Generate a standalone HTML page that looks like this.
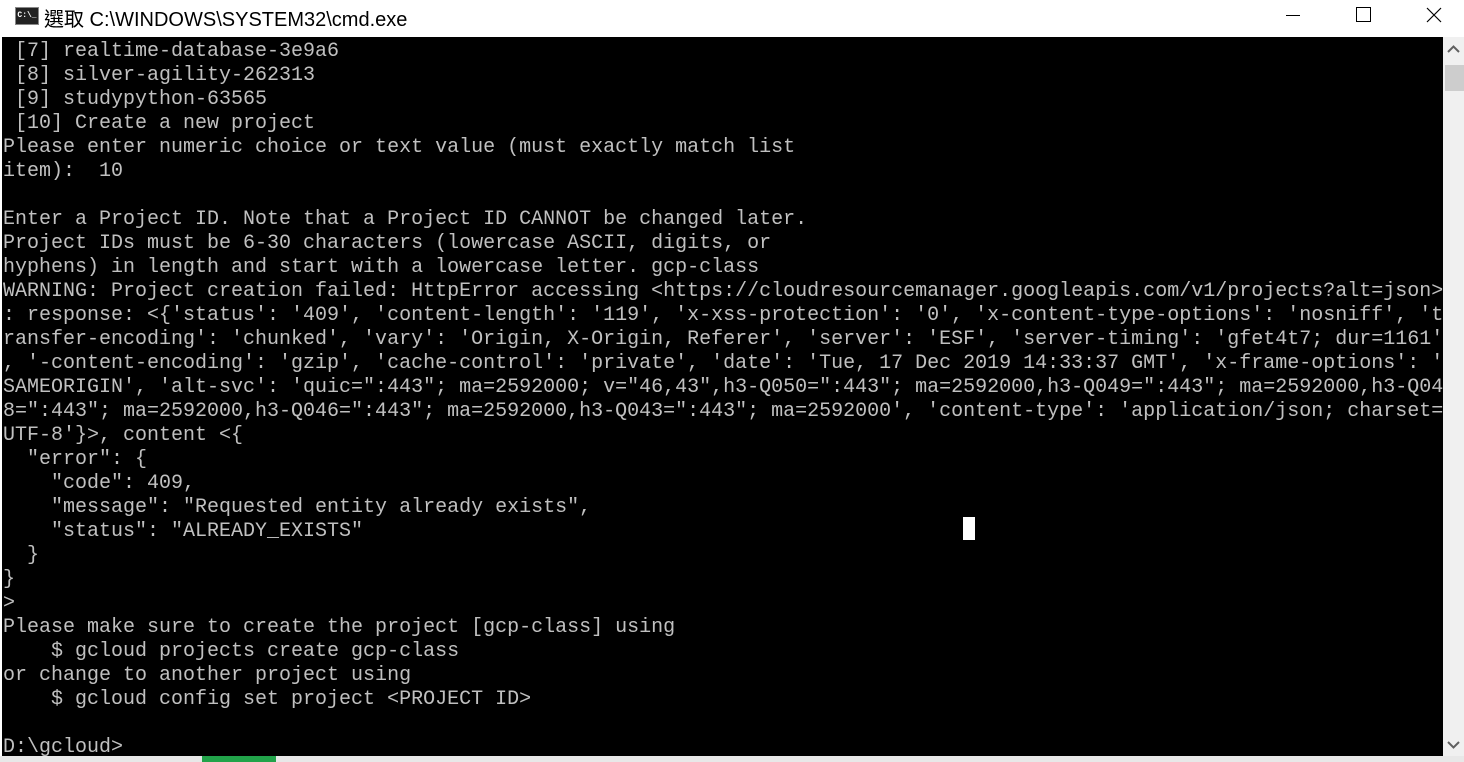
<!DOCTYPE html>
<html><head><meta charset="utf-8"><style>
body{margin:0;width:1464px;height:762px;overflow:hidden;background:#fff;position:relative;font-family:"Liberation Sans","Noto Sans CJK TC",sans-serif}
.title{position:absolute;left:0;top:0;width:1464px;height:37px;background:#fff}
.title .t{position:absolute;left:44px;top:3px;font-size:20px;color:#000}
.icon{position:absolute;left:15px;top:7px;width:22px;height:16px;background:#222;border:1px solid #888;color:#fff;font:bold 8px "Liberation Mono",monospace;line-height:16px;text-align:center}
.con{position:absolute;left:2px;top:37px;width:1441px;height:719px;background:#000;overflow:hidden}
pre{margin:0;position:absolute;left:1px;top:3px;font:20px/24px "Liberation Mono","Noto Sans CJK TC",monospace;color:#c0c0c0;white-space:pre}
.cur{position:absolute;left:961px;top:480px;width:12px;height:23px;background:#fff}
.sb{position:absolute;left:1443px;top:37px;width:21px;height:719px;background:#f0f0f0}
.thumb{position:absolute;left:1445px;top:65px;width:19px;height:26px;background:#cdcdcd}
.bot{position:absolute;left:0;top:756px;width:1464px;height:6px;background:#e8e8e8}
</style></head><body>
<div class="title"><div class="icon">C:\_</div><div class="t">選取 C:\WINDOWS\SYSTEM32\cmd.exe</div>
<div style="position:absolute;left:1286px;top:15px;width:14px;height:1px;background:#000"></div>
<div style="position:absolute;left:1356px;top:7px;width:13px;height:13px;border:1px solid #000"></div>
<svg style="position:absolute;left:1426px;top:7px" width="16" height="16"><path d="M1 1L15 15M15 1L1 15" stroke="#000" stroke-width="1.2"/></svg>
</div>
<div class="con"><pre> [7] realtime-database-3e9a6
 [8] silver-agility-262313
 [9] studypython-63565
 [10] Create a new project
Please enter numeric choice or text value (must exactly match list
item):  10

Enter a Project ID. Note that a Project ID CANNOT be changed later.
Project IDs must be 6-30 characters (lowercase ASCII, digits, or
hyphens) in length and start with a lowercase letter. gcp-class
WARNING: Project creation failed: HttpError accessing &lt;https://cloudresourcemanager.googleapis.com/v1/projects?alt=json&gt;
: response: &lt;{'status': '409', 'content-length': '119', 'x-xss-protection': '0', 'x-content-type-options': 'nosniff', 't
ransfer-encoding': 'chunked', 'vary': 'Origin, X-Origin, Referer', 'server': 'ESF', 'server-timing': 'gfet4t7; dur=1161'
, '-content-encoding': 'gzip', 'cache-control': 'private', 'date': 'Tue, 17 Dec 2019 14:33:37 GMT', 'x-frame-options': '
SAMEORIGIN', 'alt-svc': 'quic=":443"; ma=2592000; v="46,43",h3-Q050=":443"; ma=2592000,h3-Q049=":443"; ma=2592000,h3-Q04
8=":443"; ma=2592000,h3-Q046=":443"; ma=2592000,h3-Q043=":443"; ma=2592000', 'content-type': 'application/json; charset=
UTF-8'}&gt;, content &lt;{
  "error": {
    "code": 409,
    "message": "Requested entity already exists",
    "status": "ALREADY_EXISTS"
  }
}
&gt;
Please make sure to create the project [gcp-class] using
    $ gcloud projects create gcp-class
or change to another project using
    $ gcloud config set project &lt;PROJECT ID&gt;

D:\gcloud&gt;</pre><div class="cur"></div></div>
<div class="sb"><svg style="position:absolute;left:4px;top:8px" width="13" height="8"><path d="M1 7L6.5 1.5L12 7" stroke="#606060" stroke-width="2" fill="none"/></svg>
<svg style="position:absolute;left:4px;top:704px" width="13" height="8"><path d="M1 1L6.5 6.5L12 1" stroke="#606060" stroke-width="2" fill="none"/></svg></div>
<div class="thumb"></div>
<div class="bot"><div style="position:absolute;left:202px;top:0;width:74px;height:6px;background:#22a34a"></div></div>
</body></html>
